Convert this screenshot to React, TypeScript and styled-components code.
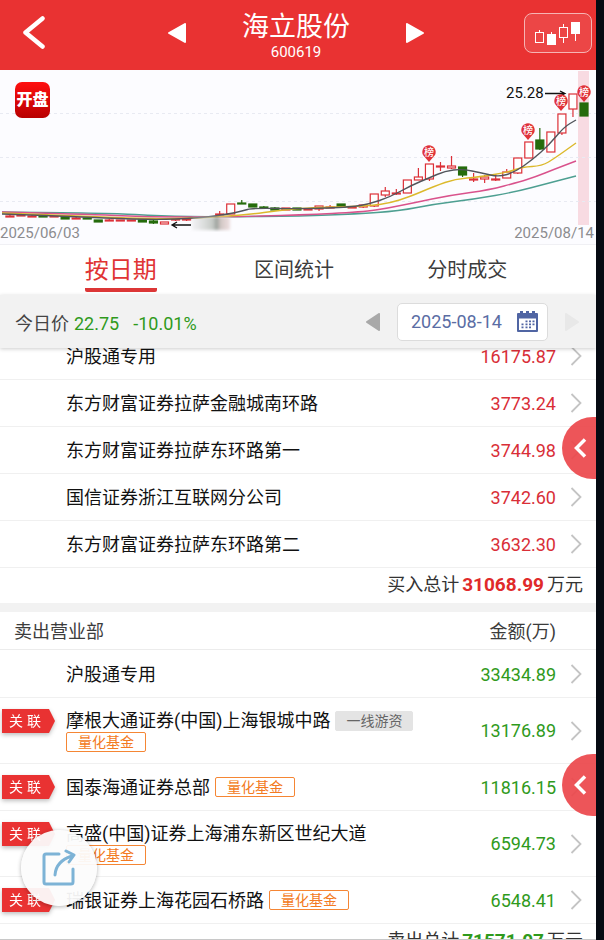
import React from 'react';
import styled, { createGlobalStyle } from 'styled-components';

const GlobalStyle = createGlobalStyle`
  *, *::before, *::after { box-sizing: border-box; }
  body {
    margin: 0;
    background: #060a12;
    font-family: Roboto, "Noto Sans CJK SC", sans-serif;
    font-size: 18px;
    color: #111;
  }
  button { font: inherit; color: inherit; border: 0; background: none; padding: 0; cursor: pointer; }
  svg { display: block; }
`;

const red = '#e93232';
const green = '#2f9a1c';

const Screen = styled.div`
  display: flex;
  flex-direction: column;
  height: 100vh;
  margin-right: 8px;
  background: #fff;
  border-bottom: 1px solid #c8c8c8;
  overflow: hidden;
`;

const Header = styled.header`
  display: grid;
  grid-template-columns: 1fr auto 1fr;
  align-items: center;
  flex: none;
  height: 70px;
  padding: 0 4px 4px;
  background: ${red};
  color: #fff;
`;

const BackButton = styled.button`
  justify-self: start;
  padding-left: 17px;
`;

const StockSwitch = styled.div`
  display: flex;
  align-items: center;
  gap: 56px;
  margin-right: 4px;
`;

const StockTitle = styled.div`
  padding-top: 4px;
  text-align: center;
`;

const StockName = styled.h1`
  margin: 0;
  font-size: 27px;
  line-height: 34px;
  font-weight: 400;
`;

const StockCode = styled.div`
  font-size: 15px;
  line-height: 16px;
`;

const KLineButton = styled.button`
  justify-self: end;
  display: flex;
  align-items: center;
  justify-content: center;
  width: 68px;
  height: 40px;
  border: 1px solid #f6b4b4;
  border-radius: 8px;
  background: #ec4646;
`;

const ChartPanel = styled.section`
  position: relative;
  flex: none;
  background: #fcfcff;
  border-bottom: 1px solid #f0f0f4;
  padding-bottom: 2px;
`;

const ChartSvg = styled.svg`
  width: 100%;
  height: auto;
  overflow: visible;
`;

const ChartDates = styled.div`
  display: flex;
  justify-content: space-between;
  padding-right: 2px;
  font-size: 15px;
  line-height: 18px;
  color: #8c8c8f;
`;

const AppBadge = styled.div`
  position: absolute;
  left: 15px;
  top: 12px;
  width: 35px;
  height: 36px;
  border-radius: 7px;
  background: linear-gradient(#ff1010, #b80000);
  color: #fff;
  font-size: 16px;
  font-weight: 900;
  line-height: 36px;
  text-align: center;
  white-space: nowrap;
`;

const Tabs = styled.nav`
  display: flex;
  flex: none;
  height: 50px;
  padding: 0 42px 0 34px;
`;

const Tab = styled.button<{ $active?: boolean }>`
  display: flex;
  flex: 1;
  justify-content: center;
  align-items: flex-start;
  color: ${p => (p.$active ? '#e03434' : '#3c3c3c')};
  font-size: ${p => (p.$active ? '24px' : '20px')};
  line-height: 50px;

  span {
    height: 47px;
    border-bottom: 4px solid ${p => (p.$active ? '#dc3636' : 'transparent')};
    border-radius: 2px;
  }
`;

const DateBar = styled.div`
  position: relative;
  z-index: 1;
  display: flex;
  align-items: center;
  justify-content: space-between;
  flex: none;
  height: 53px;
  padding: 0 17px 0 15px;
  background: #f2f2f2;
  box-shadow: 0 1px 4px rgba(0, 0, 0, 0.2);
`;

const Price = styled.div`
  display: flex;
  align-items: baseline;
  color: #444;
`;

const PriceValue = styled.span<{ $gap: number }>`
  margin-left: ${p => p.$gap}px;
  color: ${green};
`;

const DatePicker = styled.div`
  display: flex;
  align-items: center;
  gap: 17px;
`;

const DateButton = styled.button`
  display: flex;
  align-items: center;
  justify-content: space-between;
  width: 151px;
  height: 38px;
  padding: 0 9px 0 13px;
  border: 1px solid #dcdcdc;
  border-radius: 5px;
  background: #fff;
  color: #5a6da4;
`;

const Scroller = styled.main`
  flex: 1;
  min-height: 0;
  overflow-y: auto;
  scrollbar-width: none;
`;

const BuyList = styled.ul`
  list-style: none;
  margin: -15px 0 0;
  padding: 0;
`;

const SellList = styled.ul`
  list-style: none;
  margin: 0;
  padding: 1px 0 0;
`;

const Row = styled.li`
  display: flex;
  align-items: center;
  min-height: 47px;
  padding: 11px 14px 11px 0;
  border-bottom: 1px solid #f0f0f0;
`;

const TagCell = styled.div`
  align-self: flex-start;
  flex: none;
  width: 66px;
  padding-left: 2px;
  filter: drop-shadow(0 2px 2px rgba(0, 0, 0, 0.25));
`;

const RelatedTag = styled.div`
  display: flex;
  gap: 4px;
  width: 53px;
  height: 24px;
  margin-bottom: -1px;
  padding-left: 7px;
  background: ${red};
  clip-path: polygon(0 0, 47px 0, 53px 50%, 47px 100%, 0 100%);
  color: #fff;
  font-size: 14px;
  line-height: 24px;
`;

const Branch = styled.div`
  display: flex;
  flex: 1;
  flex-wrap: wrap;
  align-items: center;
  column-gap: 5px;
`;

const BranchName = styled.span`
  line-height: 23px;
`;

const Label = styled.span<{ $kind: 'fund' | 'hot' }>`
  height: 20px;
  padding: 0 ${p => (p.$kind === 'fund' ? 11 : 10)}px;
  border: 1px solid ${p => (p.$kind === 'fund' ? '#f58634' : '#e4e4e4')};
  border-radius: 2px;
  background: ${p => (p.$kind === 'fund' ? '#fff' : '#e4e4e4')};
  color: ${p => (p.$kind === 'fund' ? '#f37a22' : '#666')};
  font-size: 14px;
  line-height: 18px;
`;

const Amount = styled.span<{ $color: string }>`
  flex: none;
  width: 118px;
  margin-right: 14px;
  color: ${p => p.$color};
  line-height: 23px;
  text-align: right;
`;

const Total = styled.div`
  display: flex;
  align-items: baseline;
  justify-content: flex-end;
  height: 35px;
  padding-right: 13px;
  color: #333;
  line-height: 34px;
`;

const TotalValue = styled.strong<{ $color: string }>`
  margin: 0 3px;
  color: ${p => p.$color};
  font-size: 19px;
`;

const SectionHead = styled.div`
  display: flex;
  align-items: center;
  justify-content: space-between;
  height: 47px;
  padding: 0 40px 2px 14px;
  border-top: 9px solid #f2f2f2;
  border-bottom: 1px solid #ececec;
  color: #3c3c3c;
`;

const SideButton = styled.button<{ $top: number }>`
  position: fixed;
  z-index: 2;
  right: 8px;
  top: ${p => p.$top}px;
  display: flex;
  align-items: center;
  width: 34px;
  height: 62px;
  padding-left: 11px;
  border-radius: 31px 0 0 31px;
  background: rgba(236, 72, 76, 0.93);
`;

const ShareButton = styled.button`
  position: fixed;
  z-index: 2;
  left: 21px;
  bottom: 34px;
  display: flex;
  align-items: center;
  justify-content: center;
  width: 76px;
  height: 76px;
  border-radius: 50%;
  background: rgba(252, 252, 252, 0.94);
  box-shadow: 0 1px 4px rgba(0, 0, 0, 0.3);
`;

type Candle = [top: number, bottom: number, high: number, low: number, kind: 'up' | 'down'];

/* Newest trading day first. */
const candles: (Candle | null)[] = [
  [33, 46, 33, 46, 'down'], [24, 39, 24, 47, 'up'], [44, 63, 44, 65, 'up'], [62, 82, 62, 82, 'up'],
  [70, 79, 58, 80, 'down'], [72, 88, 72, 88, 'up'], [88, 103, 88, 104, 'up'], [102, 108, 99, 108, 'up'],
  [109, 110, 104, 111, 'up'], [107, 109, 105, 113, 'up'], [109, 110, 103, 112, 'up'], [97, 105, 97, 107, 'down'],
  [96, 98, 86, 99, 'up'], [96, 97, 92, 101, 'up'], [94, 109, 94, 111, 'up'], [107, 110, 98, 110, 'up'],
  [110, 123, 110, 123, 'up'], [123, 124, 119, 125, 'up'], [121, 125, 117, 127, 'up'], [124, 136, 124, 137, 'up'],
  [135, 137, 135, 138, 'up'], [137, 138, 137, 138, 'up'], [134, 137, 134, 138, 'down'], [137, 138, 135, 138, 'up'],
  [136, 139, 136, 141, 'up'], [139, 140, 139, 140, 'up'], [138, 140, 138, 140, 'down'], [138, 140, 138, 140, 'up'],
  [138, 140, 137, 140, 'down'], [137, 138, 136, 139, 'down'], [134, 137, 134, 137, 'down'], [133, 134, 130, 134, 'down'],
  [134, 144, 134, 144, 'up'], [144, 145, 141, 145, 'up'], null, null,
  [149, 150, 148, 151, 'up'], [149, 150, 148, 151, 'up'], [152, 154, 152, 154, 'up'], [151, 153, 150, 154, 'down'],
  [150, 152, 150, 152, 'down'], [150, 151, 150, 151, 'up'], [150, 151, 150, 151, 'up'], [150, 151, 149, 151, 'up'],
  [150, 152, 150, 152, 'down'], [148, 149, 148, 149, 'down'], [148, 149, 147, 149, 'up'], [146, 149, 146, 149, 'down'],
  [146, 147, 146, 147, 'up'], [145, 147, 145, 147, 'down'], [146, 147, 145, 147, 'up'], [145, 146, 145, 146, 'up'],
  [146, 147, 145, 147, 'up'],
];

const averages = [
  { color: '#4d9f91', points: '2,142 110,143 160,146 220,147 302,146 355,144 399,141 435,134 475,129 515,122 549,113 576,106' },
  { color: '#d9528c', points: '2,142 80,144 150,147 220,147 302,145 362,142 389,138 412,133 452,125 489,120 519,112 535,107 555,99 576,91' },
  { color: '#dcb92c', points: '2,143 80,146 150,149 200,148 229,146 253,144 275,141 302,138 369,136 390,133 409,127 435,116 455,109 479,107 509,102 522,97 542,96 555,88 576,73' },
  { color: '#52555c', points: '2,144 60,146 150,150 200,148 229,144 242,141 253,138 302,139 352,137 369,134 390,127 412,115 429,108 445,101 462,99 482,103 499,107 515,102 532,90 549,75 564,57 576,50' },
];

const pins = [[429, 82], [528, 60], [561, 31], [584, 22]];

function smooth(points: string) {
  const p = points.split(' ').map(s => s.split(',').map(Number));
  let d = `M${p[0]}`;
  for (let i = 1; i < p.length - 1; i++) {
    d += ` Q${p[i]} ${(p[i][0] + p[i + 1][0]) / 2},${(p[i][1] + p[i + 1][1]) / 2}`;
  }
  return `${d} L${p[p.length - 1]}`;
}

function PriceChart() {
  return (
    <ChartSvg viewBox="0 0 596 154" role="img" aria-label="日K线">
      <defs>
        <linearGradient id="smear">
          <stop offset="0" stopColor="#d9d9d9" stopOpacity="0.3" />
          <stop offset="0.55" stopColor="#c4c8c4" />
          <stop offset="0.65" stopColor="#9aa09b" />
          <stop offset="0.75" stopColor="#d0c6c4" />
          <stop offset="1" stopColor="#e3cccb" stopOpacity="0.6" />
        </linearGradient>
        <filter id="soft"><feGaussianBlur stdDeviation="1.5" /></filter>
      </defs>
      <rect x="578" y="1" width="11" height="154" fill="#f8dbe2" />
      {[43.5, 87.5, 131.5].map(y => (
        <line key={y} x1="0" x2="596" y1={y} y2={y} stroke="#e8eaf2" strokeDasharray="3 3" />
      ))}
      {candles.map((c, i) => {
        if (!c) return null;
        const x = 584 - i * 11.04;
        const [top, bottom, high, low, kind] = c;
        const color = kind === 'up' ? '#dc3038' : '#256c0c';
        return (
          <g key={i} stroke={color} strokeWidth="1.2">
            <line x1={x} x2={x} y1={high} y2={low} />
            <rect x={x - 4} y={top} width="8" height={bottom - top} fill={kind === 'up' ? '#fff' : color} />
          </g>
        );
      })}
      {averages.map(a => (
        <path key={a.color} d={smooth(a.points)} fill="none" stroke={a.color} strokeWidth="1.4" />
      ))}
      <rect x="192" y="147" width="38" height="13" fill="url(#smear)" filter="url(#soft)" />
      <path d="M191 155H172M177 152l-5 3 5 3" fill="none" stroke="#111" strokeWidth="1.3" />
      <path d="M545 23.5H565M560 21l5 2.5-5 2.5" fill="none" stroke="#111" strokeWidth="1.3" />
      <text x="506" y="28" fontSize="15" fill="#111">25.28</text>
      {pins.map(([x, y]) => (
        <g key={x}>
          <path d={`M${x - 6} ${y + 3}L${x} ${y + 10}L${x + 6} ${y + 3}A6.7 6.7 0 1 0 ${x - 6} ${y + 3}Z`} fill="#e0323a" />
          <text x={x} y={y + 4} fontSize="10" fontWeight="500" fill="#fff" textAnchor="middle">榜</text>
        </g>
      ))}
    </ChartSvg>
  );
}

function Triangle({ dir, color, width, height }: { dir: 'left' | 'right'; color: string; width: number; height: number }) {
  return (
    <svg width={width} height={height} viewBox="0 0 18 20" preserveAspectRatio="none">
      <path
        d={dir === 'left' ? 'M1 10L17 1V19Z' : 'M17 10L1 1V19Z'}
        fill={color} stroke={color} strokeWidth="2" strokeLinejoin="round"
      />
    </svg>
  );
}

function CandlesIcon() {
  return (
    <svg width="46" height="24" viewBox="0 0 46 24" fill="none" stroke="#fff">
      <path d="M4.5 9v2.5M16.5 11v3M28.5 3v3M28.5 16v6M40.5 12v8" />
      <rect x="0.5" y="11.5" width="8" height="10" />
      <rect x="12.5" y="13.5" width="8" height="10" fill="#fff" />
      <rect x="24.5" y="6.5" width="8" height="10" />
      <rect x="36.5" y="1.5" width="8" height="11" fill="#fff" />
    </svg>
  );
}

function CalendarIcon() {
  return (
    <svg width="21" height="21" viewBox="0 0 21 21">
      <path d="M1 2h2V0h3v2h3V0h3v2h3V0h3v2h2q1 0 1 1v17q0 1-1 1H1q-1 0-1-1V3q0-1 1-1Z" fill="#5065a3" />
      <path d="M2 7.5h17V19H2Z" fill="#fff" />
      <path
        d="M8.5 10.3h2M12 10.3h2M15.5 10.3h2M4.5 13.3h2M8.5 13.3h2M12 13.3h2M15.5 13.3h2M4.5 16.3h2M8.5 16.3h2M12 16.3h2"
        stroke="#5065a3" strokeWidth="1.8"
      />
    </svg>
  );
}

function Chevron() {
  return (
    <svg width="12" height="20" viewBox="0 0 12 20" fill="none" stroke="#c4c4c4" strokeWidth="1.8">
      <path d="M1.5 1L10.5 10L1.5 19" />
    </svg>
  );
}

function SideTab({ top }: { top: number }) {
  return (
    <SideButton $top={top} aria-label="展开">
      <svg width="14" height="20" viewBox="0 0 14 20" fill="none" stroke="#fff" strokeWidth="3.5">
        <path d="M12 1.5L3.5 10L12 18.5" />
      </svg>
    </SideButton>
  );
}

type Entry = { name: string; amount: string; related?: boolean; hot?: boolean; fund?: boolean };

const buys: Entry[] = [
  { name: '沪股通专用', amount: '16175.87' },
  { name: '东方财富证券拉萨金融城南环路', amount: '3773.24' },
  { name: '东方财富证券拉萨东环路第一', amount: '3744.98' },
  { name: '国信证券浙江互联网分公司', amount: '3742.60' },
  { name: '东方财富证券拉萨东环路第二', amount: '3632.30' },
];

const sells: Entry[] = [
  { name: '沪股通专用', amount: '33434.89' },
  { name: '摩根大通证券(中国)上海银城中路', amount: '13176.89', related: true, hot: true, fund: true },
  { name: '国泰海通证券总部', amount: '11816.15', related: true, fund: true },
  { name: '高盛(中国)证券上海浦东新区世纪大道', amount: '6594.73', related: true, fund: true },
  { name: '瑞银证券上海花园石桥路', amount: '6548.41', related: true, fund: true },
];

function EntryRow({ entry, color }: { entry: Entry; color: string }) {
  return (
    <Row>
      <TagCell>{entry.related && <RelatedTag><span>关</span><span>联</span></RelatedTag>}</TagCell>
      <Branch>
        <BranchName>{entry.name}</BranchName>
        {entry.hot && <Label $kind="hot">一线游资</Label>}
        {entry.fund && <Label $kind="fund">量化基金</Label>}
      </Branch>
      <Amount $color={color}>{entry.amount}</Amount>
      <Chevron />
    </Row>
  );
}

export default function App() {
  return (
    <>
      <GlobalStyle />
      <Screen>
        <Header>
          <BackButton aria-label="返回">
            <svg width="28" height="34" viewBox="0 0 28 34" fill="none" stroke="#fff" strokeWidth="4.5" strokeLinecap="round" strokeLinejoin="round">
              <path d="M21.5 2.5L4.500 16.5L21.5 30.5" />
            </svg>
          </BackButton>
          <StockSwitch>
            <button aria-label="上一只"><Triangle dir="left" color="#fff" width={18} height={20} /></button>
            <StockTitle>
              <StockName>海立股份</StockName>
              <StockCode>600619</StockCode>
            </StockTitle>
            <button aria-label="下一只"><Triangle dir="right" color="#fff" width={18} height={20} /></button>
          </StockSwitch>
          <KLineButton aria-label="K线"><CandlesIcon /></KLineButton>
        </Header>

        <ChartPanel>
          <PriceChart />
          <ChartDates><span>2025/06/03</span><span>2025/08/14</span></ChartDates>
          <AppBadge>开盘</AppBadge>
        </ChartPanel>

        <Tabs>
          <Tab $active><span>按日期</span></Tab>
          <Tab><span>区间统计</span></Tab>
          <Tab><span>分时成交</span></Tab>
        </Tabs>

        <DateBar>
          <Price>
            今日价<PriceValue $gap={5}>22.75</PriceValue><PriceValue $gap={14}>-10.01%</PriceValue>
          </Price>
          <DatePicker>
            <button aria-label="前一天"><Triangle dir="left" color="#a9a9a9" width={14} height={18} /></button>
            <DateButton>2025-08-14<CalendarIcon /></DateButton>
            <button aria-label="后一天"><Triangle dir="right" color="#e8e8e8" width={14} height={18} /></button>
          </DatePicker>
        </DateBar>

        <Scroller>
          <BuyList>
            {buys.map(e => <EntryRow key={e.name} entry={e} color="#d92e37" />)}
          </BuyList>
          <Total>买入总计<TotalValue $color="#e02a2a">31068.99</TotalValue>万元</Total>
          <SectionHead><span>卖出营业部</span><span>金额(万)</span></SectionHead>
          <SellList>
            {sells.map(e => <EntryRow key={e.name} entry={e} color={green} />)}
          </SellList>
          <Total>卖出总计<TotalValue $color={green}>71571.07</TotalValue>万元</Total>
        </Scroller>
      </Screen>
      <SideTab top={417} />
      <SideTab top={754} />
      <ShareButton aria-label="分享">
        <svg width="34" height="38" viewBox="0 0 34 38" fill="none" stroke="#7db3d6" strokeWidth="3" strokeLinecap="round" strokeLinejoin="round">
          <path d="M17 5H4Q2 5 2 7V33Q2 35 4 35H29Q31 35 31 33V20" />
          <path d="M13 26Q14 12 30 7M24 2L32 6L27 13" />
        </svg>
      </ShareButton>
    </>
  );
}
